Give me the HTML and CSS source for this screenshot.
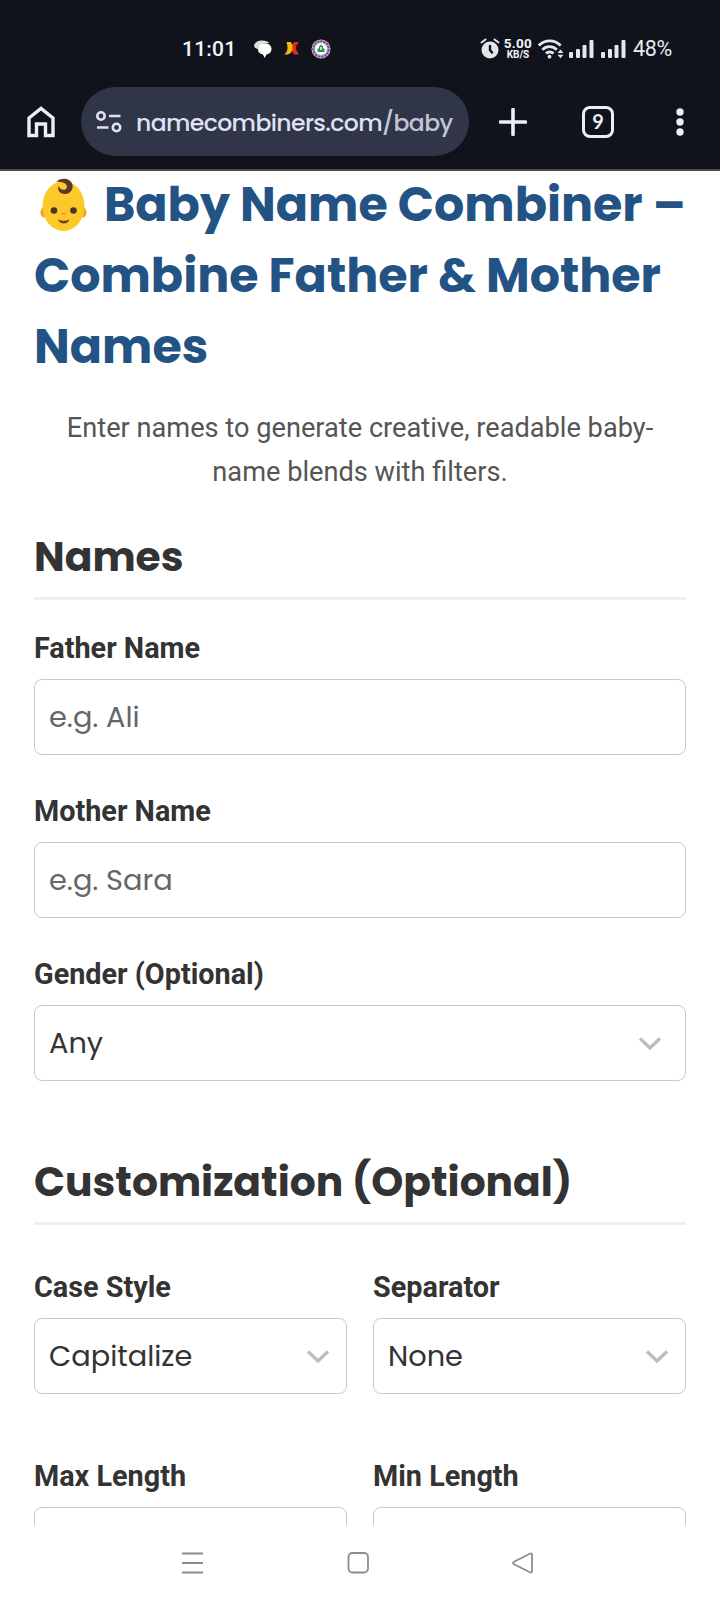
FILE: index.html
```html
<!DOCTYPE html>
<html lang="en">
<head>
<meta charset="utf-8">
<title>Baby Name Combiner</title>
<link rel="stylesheet" href="styles.css">
</head>
<body>
<div class="screen">
  <header class="chrome">
    <div class="status">
      <div class="status-left">
        <span class="clock">11:01</span>
        <svg class="ic-chat" width="18" height="18" viewBox="0 0 18 18"><path d="M0 5.500C1 2 4 .5 8 .5c3.500 0 6 1 7.500 2.700C10 2.200 5 4 3.800 9 1.500 8.500.3 7.500 0 5.500z" fill="#dcdee3"/><path d="M10 3.300c4.500 0 7.500 2 7.500 5.700 0 3-2 5-5 5.500L10.500 18 9 14.500C5.500 14 4 12 4 9.500c0-3.500 2.500-6.200 6-6.200z" fill="#fff"/></svg>
        <svg class="ic-x" width="16" height="15" viewBox="0 0 16 15"><path d="M8 3.500L10.500 1H15l-2.500 3.500c-1 2-1 3.500 .5 5.500l2 3.500H10L7 9z" fill="#dc2f1a"/><path d="M2.500 1H7l1.500 3.500v3C8.500 11 5.500 14 1.500 13.500H0c3.500-2.500 4.500-6 2.500-12.500z" fill="#fbb616"/></svg>
        <svg class="ic-badge" width="20" height="20" viewBox="0 0 20 20"><circle cx="10" cy="10" r="9.500" fill="#d9cfe2"/><circle cx="10" cy="10" r="7.700" fill="none" stroke="#7b4f8e" stroke-width="2.300" stroke-dasharray="2.600 .6"/><circle cx="10" cy="10" r="5.700" fill="#fff"/><path d="M6.500 13V9.500H8V7.500l2-2 2 2v2h1.500V13z" fill="#23935a"/><path d="M9.300 8h1.400v3H9.300z" fill="#fff"/></svg>
      </div>
      <div class="status-right">
        <svg class="ic-alarm" width="20" height="21" viewBox="0 0 20 21"><circle cx="10" cy="12" r="8.500" fill="#e4e6ea"/><path d="M1.500 4.500L5.500 1.500M18.500 4.500L14.500 1.500" stroke="#e4e6ea" stroke-width="2" stroke-linecap="round"/><path d="M10 8V12l2 2.500" stroke="#10131b" stroke-width="2.400" fill="none" stroke-linecap="round"/></svg>
        <div class="rate"><span class="rate-n">5.00</span><span class="rate-u">KB/S</span></div>
        <svg class="ic-wifi" width="26" height="20" viewBox="0 0 26 20"><g fill="none" stroke="#e4e6ea" stroke-width="2.800"><path d="M.8 6.500C7 .2 16.500.2 22.700 6.500"/><path d="M4.300 10.700c4-4 10.500-4 14.500 0"/><path d="M8 14.500c2-2 5.500-2 7.500 0"/></g><circle cx="11.500" cy="17.700" r="1.900" fill="#e4e6ea"/><path d="M19.500 14l3-3.500 3 3.500zM19.500 15.700l3 3.500 3-3.500z" fill="#e4e6ea"/></svg>
        <svg class="ic-signal" width="25" height="18" viewBox="0 0 25 18"><g fill="#e4e6ea"><rect x="0" y="12" width="4" height="6" rx="1"/><rect x="7" y="9" width="4" height="9" rx="1"/><rect x="13.500" y="5" width="4" height="13" rx="1"/><rect x="20.500" y="0" width="4" height="18" rx="1"/></g></svg>
        <svg class="ic-signal2" width="25" height="18" viewBox="0 0 25 18"><g fill="#e4e6ea"><rect x="0" y="12" width="4" height="6" rx="1"/><rect x="7" y="9" width="4" height="9" rx="1"/><rect x="13.500" y="5" width="4" height="13" rx="1"/><rect x="20.500" y="0" width="4" height="18" rx="1"/></g></svg>
        <span class="batt">48%</span>
      </div>
    </div>
    <div class="toolbar">
      <svg class="ic-home" width="28" height="32" viewBox="0 0 28 32"><path d="M2 29.500V12L14 2.500 26 12v17.500h-7.500V18h-9v11.500z" fill="none" stroke="#eceef4" stroke-width="3.400"/></svg>
      <div class="pill">
        <svg class="ic-tune" width="26" height="22" viewBox="0 0 26 22"><g fill="none" stroke="#dfe2f2" stroke-width="2.600"><circle cx="5" cy="5" r="3.700"/><path d="M13 5h11.500M1 16.500h11.500"/><circle cx="20.500" cy="16.500" r="3.700"/></g></svg>
        <span class="url">namecombiners.com<span class="path">/baby</span></span>
      </div>
      <svg class="ic-plus" width="28" height="28" viewBox="0 0 28 28"><path d="M14 1.500v25M1.500 14h25" stroke="#eceef4" stroke-width="3.600" stroke-linecap="round"/></svg>
      <div class="tabs">9</div>
      <svg class="ic-more" width="8" height="28" viewBox="0 0 8 28"><g fill="#eceef4"><circle cx="4" cy="4" r="3.700"/><circle cx="4" cy="14" r="3.700"/><circle cx="4" cy="24" r="3.700"/></g></svg>
    </div>
  </header>
  <main class="page">
    <h1 class="title"><svg class="baby" width="48" height="54" viewBox="0 0 48 54"><ellipse cx="4" cy="34.500" rx="3.500" ry="5" fill="#eda51c"/><ellipse cx="43" cy="34.500" rx="3.500" ry="5" fill="#eda51c"/><ellipse cx="23.500" cy="28" rx="21" ry="25" fill="#fcc92a"/><path d="M16.500 3.500C21-.8 31 0 32.500 7c1 5.500-4 10-9.500 8.800-4-1-5.800-4.500-4.500-7.800 1.500 3 3.500 4.300 6 3.700C27.500 11 27.700 7.500 25 5.500c-2.500-1.700-5.500-1.500-8.500-2z" fill="#5c3924"/><circle cx="14" cy="32.500" r="3.300" fill="#493526"/><circle cx="33.500" cy="32.500" r="3.300" fill="#493526"/><path d="M21 35h5.500q-2.700 3.500-5.500 0z" fill="#f08a1c"/><path d="M18 41.500q5.700 2.500 11.500 0-1.500 4-5.700 4T18 41.500z" fill="#6d4220"/></svg>Baby Name Combiner –<br>Combine Father &amp; Mother<br>Names</h1>
    <p class="intro">Enter names to generate creative, readable baby-<br>name blends with filters.</p>
    <h2 class="section">Names</h2>
    <div class="field"><label class="label">Father Name</label><div class="box ph">e.g. Ali</div></div>
    <div class="field"><label class="label">Mother Name</label><div class="box ph">e.g. Sara</div></div>
    <div class="field last"><label class="label">Gender (Optional)</label><div class="box sel wide">Any<svg class="chev" width="24" height="15" viewBox="0 0 24 15"><path d="M2 2.500l10 9.500 10-9.500" fill="none" stroke="#bdbdbd" stroke-width="3.400"/></svg></div></div>
    <h2 class="section">Customization (Optional)</h2>
    <div class="grid">
      <div><label class="label">Case Style</label><div class="box sel">Capitalize<svg class="chev" width="24" height="15" viewBox="0 0 24 15"><path d="M2 2.500l10 9.500 10-9.500" fill="none" stroke="#bdbdbd" stroke-width="3.400"/></svg></div></div>
      <div><label class="label">Separator</label><div class="box sel">None<svg class="chev" width="24" height="15" viewBox="0 0 24 15"><path d="M2 2.500l10 9.500 10-9.500" fill="none" stroke="#bdbdbd" stroke-width="3.400"/></svg></div></div>
      <div><label class="label">Max Length</label><div class="box"></div></div>
      <div><label class="label">Min Length</label><div class="box"></div></div>
    </div>
  </main>
  <nav class="nav">
    <svg width="22" height="22" viewBox="0 0 22 22"><path d="M0 1.500h21M0 11h21M0 20.500h21" stroke="#8c8c8c" stroke-width="1.800"/></svg>
    <svg width="22" height="22" viewBox="0 0 22 22"><rect x="1.500" y="1" width="19.500" height="19.500" rx="4" fill="none" stroke="#8c8c8c" stroke-width="1.800"/></svg>
    <svg width="22" height="22" viewBox="0 0 22 22"><path d="M18.300 1.500L2 9.700q-2 1.300 0 2.600l16.300 8.200q1.700.5 1.700-1.500V3q0-2-1.700-1.500z" fill="none" stroke="#8c8c8c" stroke-width="1.800"/></svg>
  </nav>
</div>
</body>
</html>
```
FILE: styles.css
```css
* { box-sizing: border-box; }
body { margin: 0; background: #fff; font-family: Roboto, "Liberation Sans", sans-serif; }
svg { display: block; flex: none; }
.screen { width: 720px; height: 1600px; display: flex; flex-direction: column; overflow: hidden; background: #fff; }

.chrome { height: 171px; flex: none; background: #10131b; border-bottom: 2px solid #4b4b50; }
.status { height: 85px; padding: 12px 48px 0 182px; display: flex; align-items: center; justify-content: space-between; color: #e8eaee; }
.status-left, .status-right { display: flex; align-items: center; }
.clock { font: 500 21px/24px Roboto, sans-serif; letter-spacing: .2px; width: 72px; color: #f4f5f8; }
.ic-chat { margin-right: 12px; }
.ic-x { margin-right: 11px; }
.ic-alarm { margin-right: 4px; }
.rate { width: 28px; display: flex; flex-direction: column; align-items: center; font-family: Roboto, sans-serif; font-weight: 700; color: #f4f5f8; }
.rate-n { font-size: 13.500px; line-height: 13px; letter-spacing: .3px; }
.rate-u { font-size: 10px; line-height: 10px; }
.ic-wifi { margin: 0 5px 0 6px; }
.ic-signal2 { margin: 0 7px; }
.batt { font: 400 21.500px/24px Roboto, sans-serif; letter-spacing: -.3px; }

.toolbar { height: 73px; padding: 0 36px 0 27px; display: flex; align-items: center; }
.pill { width: 388px; height: 69px; margin-left: 26px; padding-left: 15px; border-radius: 35px; background: #303548; display: flex; align-items: center; overflow: hidden; }
.url { margin-left: 14px; padding-top: 2px; font: 500 23.500px/36px Poppins, Inter, sans-serif; letter-spacing: -.6px; color: #dfe2f2; white-space: nowrap; }
.path { color: #c3c6d6; }
.ic-plus { margin-left: 30px; }
.tabs { width: 32px; height: 32px; margin-left: 55px; border: 3px solid #eceef4; border-radius: 8px; color: #eceef4; font: 700 20px/25px Lato, sans-serif; text-align: center; }
.ic-more { margin-left: auto; }

.page { height: 1354px; flex: none; padding: 0 34px; overflow: hidden; }
.title { margin: -2px 0 25px; font: 700 47.550px/71px Poppins, Inter, sans-serif; color: #225384; white-space: nowrap; }
.baby { display: inline-block; vertical-align: -11px; margin: 0 16px 0 6px; }
.intro { margin: 0 0 33px; text-align: center; font-size: 27.200px; line-height: 43.500px; color: #555; white-space: nowrap; }
.section { margin: 0 0 26px; padding-bottom: 10px; border-bottom: 3px solid #eee; font: 700 40.800px/60px Poppins, Inter, sans-serif; color: #333; white-space: nowrap; }
.field { margin-bottom: 34px; }
.last { margin-bottom: 71px; }
.label { display: block; margin-bottom: 8px; font-weight: 700; font-size: 28.800px; line-height: 45px; color: #333; }
.box { height: 76px; padding: 0 23px 0 14px; border: 1.500px solid #c8c8c8; border-radius: 8px; display: flex; align-items: center; justify-content: space-between; font: 400 28.800px/44px Poppins, Inter, sans-serif; color: #333; }
.ph { color: #666; }
.grid { margin-top: 40px; display: grid; grid-template-columns: 1fr 1fr; gap: 60px 26px; }
.sel { padding-right: 16px; }
.wide { padding-right: 23px; }

.nav { flex: 1; padding: 0 186px 0 182px; display: flex; align-items: center; justify-content: space-between; }
```
